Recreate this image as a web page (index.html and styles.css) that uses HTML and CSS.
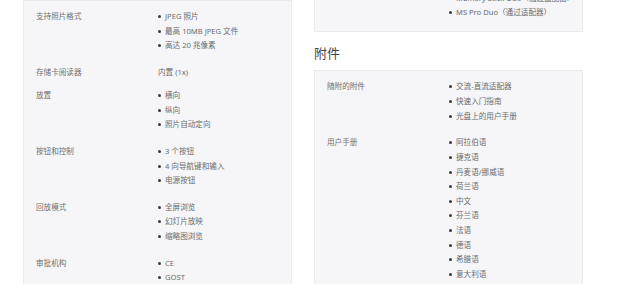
FILE: index.html
```html
<!DOCTYPE html>
<html lang="zh-CN">
<head>
<meta charset="utf-8">
<link rel="stylesheet" href="styles.css">
</head>
<body>
<div class="page">
  <div class="col col-left">
    <div class="panel">
      <div class="row">
        <div class="label">支持照片格式</div>
        <ul class="list">
          <li>JPEG 照片</li>
          <li>最高 10MB JPEG 文件</li>
          <li>高达 20 兆像素</li>
        </ul>
      </div>
      <div class="row">
        <div class="label">存储卡阅读器</div>
        <div class="value">内置 (1x)</div>
      </div>
      <div class="row">
        <div class="label">放置</div>
        <ul class="list">
          <li>横向</li>
          <li>纵向</li>
          <li>照片自动定向</li>
        </ul>
      </div>
      <div class="row">
        <div class="label">按钮和控制</div>
        <ul class="list">
          <li>3 个按钮</li>
          <li>4 向导航键和输入</li>
          <li>电源按钮</li>
        </ul>
      </div>
      <div class="row">
        <div class="label">回放模式</div>
        <ul class="list">
          <li>全屏浏览</li>
          <li>幻灯片放映</li>
          <li>缩略图浏览</li>
        </ul>
      </div>
      <div class="row">
        <div class="label">审批机构</div>
        <ul class="list">
          <li>CE</li>
          <li>GOST</li>
        </ul>
      </div>
    </div>
  </div>
  <div class="col col-right">
    <div class="panel">
      <div class="row">
        <div class="label">兼容存储卡</div>
        <ul class="list">
          <li>SD</li>
          <li>SDHC</li>
          <li>MMC</li>
          <li>Memory Stick Duo（通过适配器）</li>
          <li>MS Pro Duo（通过适配器）</li>
        </ul>
      </div>
    </div>
    <h2 class="section-title">附件</h2>
    <div class="panel">
      <div class="row">
        <div class="label">随附的附件</div>
        <ul class="list">
          <li>交流-直流适配器</li>
          <li>快速入门指南</li>
          <li>光盘上的用户手册</li>
        </ul>
      </div>
      <div class="row">
        <div class="label">用户手册</div>
        <ul class="list">
          <li>阿拉伯语</li>
          <li>捷克语</li>
          <li>丹麦语/挪威语</li>
          <li>荷兰语</li>
          <li>中文</li>
          <li>芬兰语</li>
          <li>法语</li>
          <li>德语</li>
          <li>希腊语</li>
          <li>意大利语</li>
        </ul>
      </div>
    </div>
  </div>
</div>
</body>
</html>
```

FILE: styles.css
```css
html, body {
  margin: 0;
  padding: 0;
  background: #ffffff;
}
body {
  font-family: "Noto Sans", "Noto Sans CJK SC", sans-serif;
  font-size: 7.6px;
  color: #6b6b6b;
  overflow: hidden;
  height: 284px;
}
.page {
  display: flex;
  align-items: flex-start;
  gap: 22px;
  padding-left: 23px;
}
.col {
  width: 269px;
  flex: 0 0 269px;
}
.col-right {
  margin-top: -62px;
}
.panel {
  background: #f6f6f8;
  border: 1px solid #ebebee;
  padding: 8px 12px 8px 12px;
}
.row {
  display: grid;
  grid-template-columns: 122px 1fr;
  line-height: 14.6px;
}
.row + .row {
  margin-top: 8.6px;
}
.label {
  color: #707070;
}
.value {
  color: #6b6b6b;
}
.list {
  list-style: none;
  margin: 0 0 3.5px 0;
  padding: 0;
}
.list li {
  position: relative;
  padding-left: 7px;
  white-space: nowrap;
}
.list li::before {
  content: "";
  position: absolute;
  left: 0;
  top: 6px;
  width: 3px;
  height: 3px;
  border-radius: 50%;
  background: #3a3a3a;
}
.section-title {
  margin: 13px 0 9px 0;
  font-size: 13px;
  line-height: 16px;
  font-weight: normal;
  color: #444444;
}
```
